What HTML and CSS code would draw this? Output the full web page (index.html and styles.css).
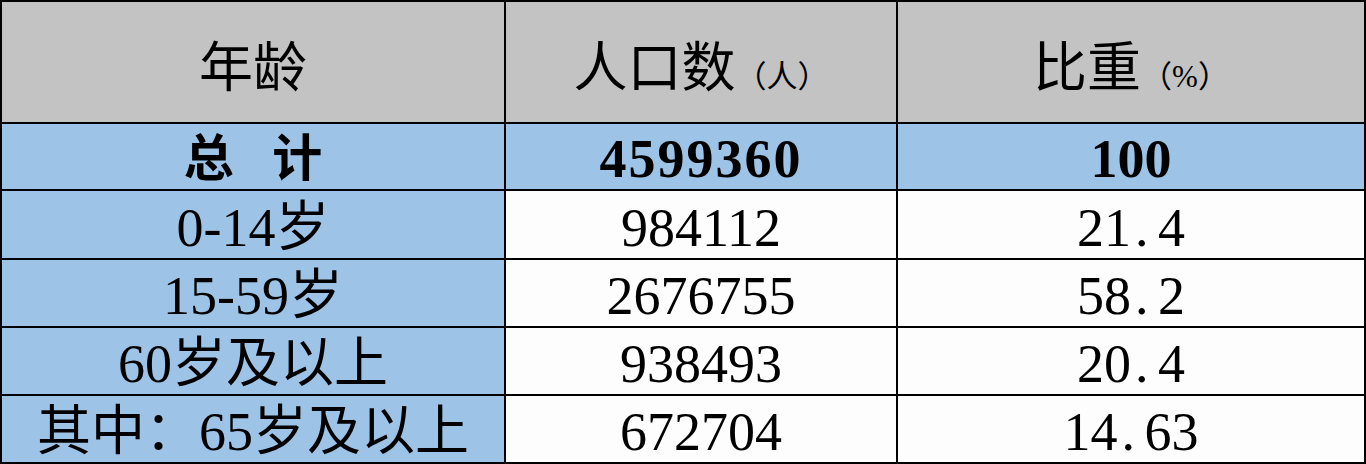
FILE: index.html
```html
<!DOCTYPE html>
<html lang="zh">
<head>
<meta charset="utf-8">
<title>年龄构成</title>
<link rel="stylesheet" href="styles.css">
</head>
<body>
<div class="table">
  <div class="cell head">年龄</div>
  <div class="cell head">人口数<span class="unit">（人）</span></div>
  <div class="cell head">比重<span class="unit">（%）</span></div>

  <div class="cell blue total"><span class="zj">总 计</span></div>
  <div class="cell blue total wide">4599360</div>
  <div class="cell blue total">100</div>

  <div class="cell blue">0-14岁</div>
  <div class="cell">984112</div>
  <div class="cell">21<span class="dot">.</span>4</div>

  <div class="cell blue">15-59岁</div>
  <div class="cell">2676755</div>
  <div class="cell">58<span class="dot">.</span>2</div>

  <div class="cell blue">60岁及以上</div>
  <div class="cell">938493</div>
  <div class="cell">20<span class="dot">.</span>4</div>

  <div class="cell blue">其中：65岁及以上</div>
  <div class="cell">672704</div>
  <div class="cell">14<span class="dot">.</span>63</div>
</div>
</body>
</html>
```

FILE: styles.css
```css
html, body {
  margin: 0;
  padding: 0;
  background: #ffffff;
}

body {
  width: 1366px;
  height: 464px;
  overflow: hidden;
  font-family: "Liberation Serif", "Noto Sans CJK SC", serif;
  color: #000;
}

.table {
  display: grid;
  grid-template-columns: 504px 392px 1fr;
  grid-template-rows: 122px 67px 69px 68px 68px 68px;
  border-top: 2px solid #000;
  border-left: 2px solid #000;
  box-sizing: border-box;
  width: 1366px;
  height: 464px;
}

.cell {
  box-sizing: border-box;
  border-right: 2px solid #000;
  border-bottom: 2px solid #000;
  display: flex;
  align-items: center;
  justify-content: center;
  font-size: 54px;
  line-height: 1;
  padding-top: 6px;
  background: #fdfdfd;
  white-space: nowrap;
}

.head {
  background: #c3c3c3;
  align-items: baseline;
  padding-top: 40px;
}

.unit {
  font-size: 31px;
}

.blue {
  background: #9dc3e6;
}

.total {
  font-weight: bold;
  padding-top: 4px;
}

.wide {
  letter-spacing: 2px;
}

.zj {
  font-size: 50px;
  word-spacing: 26px;
}

.dot {
  display: inline-block;
  width: 0.5em;
  text-align: center;
  text-indent: -0.1em;
}
```
